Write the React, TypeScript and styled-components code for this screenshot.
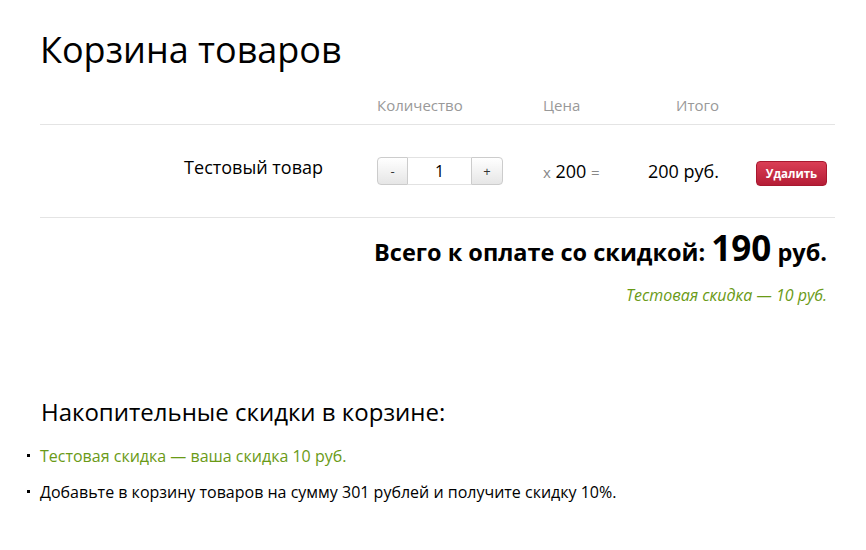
import styled, { createGlobalStyle } from "styled-components"

const Global = createGlobalStyle`
  body {
    margin: 0;
    background: #fff;
    font-family: "Open Sans", "DejaVu Sans", sans-serif;
    color: #000;
  }
`

const App: React.FC = () => {
  return (
    <Page>
      <Global />
      <Title>Корзина товаров</Title>
      <HeadRow>
        <span />
        <HeadCell>Количество</HeadCell>
        <HeadCell>Цена</HeadCell>
        <HeadCell $pad={28}>Итого</HeadCell>
        <span />
      </HeadRow>
      <ItemRow>
        <ProductName>Тестовый товар</ProductName>
        <Quantity>
          <QtyButton>-</QtyButton>
          <QtyInput value="1" readOnly />
          <QtyButton>+</QtyButton>
        </Quantity>
        <Price>
          <Muted>x</Muted> 200 <Muted>=</Muted>
        </Price>
        <Total>200 руб.</Total>
        <DeleteButton>Удалить</DeleteButton>
      </ItemRow>
      <Summary>
        <GrandTotal>
          Всего к оплате со скидкой: <Big>190</Big> руб.
        </GrandTotal>
        <DiscountNote>Тестовая скидка — 10 руб.</DiscountNote>
      </Summary>
      <SubTitle>Накопительные скидки в корзине:</SubTitle>
      <DiscountList>
        <DiscountItem $green>Тестовая скидка — ваша скидка 10 руб.</DiscountItem>
        <DiscountItem>Добавьте в корзину товаров на сумму 301 рублей и получите скидку 10%.</DiscountItem>
      </DiscountList>
    </Page>
  )
}

export default App

const Page = styled.div`
  width: 795px;
  padding: 24px 31px 40px 40px;
`
const Title = styled.h1`
  margin: 0;
  font-size: 36px;
  font-weight: 400;
  line-height: 52px;
`
const columns = "337px 166px 105px 108px 1fr"

const HeadRow = styled.div`
  display: grid;
  grid-template-columns: ${columns};
  align-items: center;
  height: 34px;
  margin-top: 14px;
  border-bottom: 1px solid #e4e4e4;
`
const HeadCell = styled.div<{ $pad?: number }>`
  font-size: 15px;
  line-height: 20px;
  color: #999;
  margin-top: -4px;
  padding-left: ${p => p.$pad ?? 0}px;
`
const ItemRow = styled.div`
  display: grid;
  grid-template-columns: ${columns};
  align-items: center;
  height: 92px;
  border-bottom: 1px solid #e4e4e4;
`
const ProductName = styled.div`
  font-size: 18px;
  line-height: 24px;
  text-align: right;
  padding-right: 54px;
  margin-top: -8px;
`
const Quantity = styled.div`
  display: flex;
  height: 28px;
  width: 126px;
`
const QtyButton = styled.button`
  width: 31px;
  height: 28px;
  padding: 0;
  border: 1px solid #ccc;
  background: linear-gradient(#fff, #e6e6e6);
  font-family: "Open Sans", sans-serif;
  font-size: 13px;
  color: #333;
  &:first-child {
    border-radius: 4px 0 0 4px;
  }
  &:last-child {
    border-radius: 0 4px 4px 0;
    width: 32px;
  }
`
const QtyInput = styled.input`
  width: 63px;
  height: 28px;
  box-sizing: border-box;
  border: 1px solid #e2e2e2;
  border-left: none;
  border-right: none;
  text-align: center;
  font-family: "Open Sans", sans-serif;
  font-size: 16px;
  outline: none;
  padding: 0;
`
const Price = styled.div`
  font-size: 18px;
  line-height: 24px;
`
const Muted = styled.span`
  color: #888;
  font-size: 15px;
`
const Total = styled.div`
  font-size: 18px;
  line-height: 24px;
`
const DeleteButton = styled.button`
  justify-self: start;
  width: 71px;
  height: 25px;
  margin-top: 4px;
  padding: 0;
  border: 1px solid #a8182f;
  border-radius: 4px;
  background: linear-gradient(#da3e55, #b51d36);
  color: #fff;
  font-family: "Open Sans", sans-serif;
  font-size: 11.5px;
  font-weight: 700;
`
const Summary = styled.div`
  display: flex;
  flex-direction: column;
  align-items: flex-end;
  padding-right: 8px;
`
const GrandTotal = styled.div`
  margin-top: 10px;
  font-size: 23.5px;
  font-weight: 700;
  line-height: 40px;
`
const Big = styled.span`
  font-size: 35px;
`
const DiscountNote = styled.div`
  margin-top: 12px;
  font-size: 16px;
  line-height: 22px;
  font-style: italic;
  color: #6a9a16;
`
const SubTitle = styled.h2`
  margin: 90px 0 0 1px;
  font-size: 24px;
  font-weight: 400;
  line-height: 32px;
`
const DiscountList = styled.ul`
  margin: 17px 0 0;
  padding: 0;
  list-style: none;
`
const DiscountItem = styled.li<{ $green?: boolean }>`
  position: relative;
  font-size: 16px;
  line-height: 22px;
  margin-bottom: 14px;
  color: ${p => (p.$green ? "#6a9a16" : "#000")};
  &:before {
    content: "";
    position: absolute;
    left: -13px;
    top: 9px;
    width: 3px;
    height: 3px;
    background: #000;
  }
`
